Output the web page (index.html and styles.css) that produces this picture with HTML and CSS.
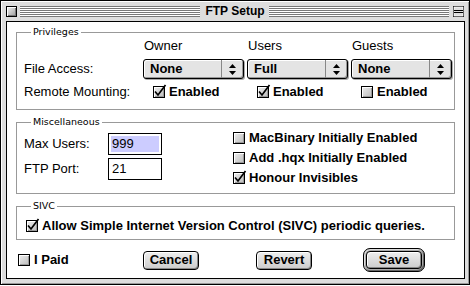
FILE: index.html
```html
<!DOCTYPE html>
<html lang="en">
<head>
    <meta charset="UTF-8">
    <title>FTP Setup</title>
    <link rel="stylesheet" href="styles.css">
</head>
<body>

<div class="window">
    <div class="titlebar">
        <span class="closebox"></span>
        <span class="stripes"></span>
        <span class="title">FTP Setup</span>
        <span class="stripes"></span>
        <svg class="shadebox" width="11" height="11" viewBox="0 0 11 11">
            <rect x="0.5" y="0.5" width="10" height="10" fill="#ddd" stroke="#000"/>
            <rect x="1" y="1" width="9" height="9" fill="none" stroke="#fff" stroke-width="0.8"/>
            <line x1="1" y1="4.5" x2="10" y2="4.5" stroke="#000"/>
            <line x1="1" y1="6.5" x2="10" y2="6.5" stroke="#000"/>
        </svg>
    </div>

    <div class="content">
        <fieldset class="group">
            <legend>Privileges</legend>
            <div class="priv-grid">
                <span></span>
                <span class="col">Owner</span>
                <span class="col">Users</span>
                <span class="col">Guests</span>

                <span class="label">File Access:</span>
                <div class="popup"><span class="popup-value">None</span><span class="popup-arrows"><svg width="7" height="11" viewBox="0 0 7 11"><polygon points="3.5,0 7,4 0,4"/><polygon points="0,7 7,7 3.5,11"/></svg></span></div>
                <div class="popup"><span class="popup-value">Full</span><span class="popup-arrows"><svg width="7" height="11" viewBox="0 0 7 11"><polygon points="3.5,0 7,4 0,4"/><polygon points="0,7 7,7 3.5,11"/></svg></span></div>
                <div class="popup"><span class="popup-value">None</span><span class="popup-arrows"><svg width="7" height="11" viewBox="0 0 7 11"><polygon points="3.5,0 7,4 0,4"/><polygon points="0,7 7,7 3.5,11"/></svg></span></div>

                <span class="label">Remote Mounting:</span>
                <span class="check on indent"><span class="box"><svg width="14" height="14" viewBox="0 0 14 14"><polyline points="1,7.5 4,11 11.5,1"/></svg></span>Enabled</span>
                <span class="check on indent"><span class="box"><svg width="14" height="14" viewBox="0 0 14 14"><polyline points="1,7.5 4,11 11.5,1"/></svg></span>Enabled</span>
                <span class="check indent"><span class="box"></span>Enabled</span>
            </div>
        </fieldset>

        <fieldset class="group">
            <legend>Miscellaneous</legend>
            <div class="misc">
                <div class="misc-fields">
                    <span class="label">Max Users:</span>
                    <div class="field selected"><span>999</span></div>
                    <span class="label">FTP Port:</span>
                    <div class="field"><span>21</span></div>
                </div>
                <div class="misc-checks">
                    <span class="check"><span class="box"></span>MacBinary Initially Enabled</span>
                    <span class="check"><span class="box"></span>Add .hqx Initially Enabled</span>
                    <span class="check on"><span class="box"><svg width="14" height="14" viewBox="0 0 14 14"><polyline points="1,7.5 4,11 11.5,1"/></svg></span>Honour Invisibles</span>
                </div>
            </div>
        </fieldset>

        <fieldset class="group">
            <legend>SIVC</legend>
            <div class="sivc">
                <span class="check on"><span class="box"><svg width="14" height="14" viewBox="0 0 14 14"><polyline points="1,7.5 4,11 11.5,1"/></svg></span>Allow Simple Internet Version Control (SIVC) periodic queries.</span>
            </div>
        </fieldset>

        <div class="actions">
            <span class="check paid"><span class="box"></span>I Paid</span>
            <button class="btn">Cancel</button>
            <button class="btn revert">Revert</button>
            <span class="default-ring"><button class="btn">Save</button></span>
        </div>
    </div>
</div>

</body>
</html>
```

FILE: styles.css
```css
body {
    margin: 0;
    background: #fff;
    font-family: "Liberation Sans", Arial, sans-serif;
    font-size: 13px;
    color: #000;
}
.window {
    width: 470px;
    height: 285px;
    box-sizing: border-box;
    border: 1px solid #000;
    background: #dddddd;
    padding: 0 4px 5px 5px;
    display: flex;
    flex-direction: column;
    box-shadow: inset 1px 1px #fff, inset -1px -1px #999;
}
.titlebar {
    height: 20px;
    display: flex;
    align-items: center;
    flex: none;
}
.closebox {
    width: 11px;
    height: 11px;
    box-sizing: border-box;
    border: 1px solid #000;
    background: linear-gradient(135deg, #f4f4f4, #9a9a9a);
    box-shadow: inset 1px 1px #fff, inset -1px -1px #777;
    flex: none;
}
.stripes {
    flex: 1;
    height: 11px;
    margin: 0 4px 0 3px;
    background: repeating-linear-gradient(to bottom, #777 0 1px, #fff 1px 2px);
}
.stripes + .shadebox {
    margin-right: 1px;
}
.title {
    font-weight: bold;
    font-size: 12px;
    line-height: 14px;
    padding: 0 1px;
}
.shadebox {
    flex: none;
}
.content {
    flex: 1;
    background: #fff;
    border: 1px solid #000;
    padding: 0 9px;
    display: flex;
    flex-direction: column;
}
.group {
    margin: 6px 0 0;
    padding: 0;
    border: 1px solid #999;
    min-width: 0;
}
.group:first-child {
    margin-top: 4px;
}
.group legend {
    margin-left: 14px;
    padding: 0 2px;
    font-family: "DejaVu Sans", sans-serif;
    font-size: 9.5px;
    line-height: 12px;
}
.label {
    line-height: 16px;
}
.priv-grid {
    display: grid;
    grid-template-columns: 116px repeat(3, 101px);
    grid-template-rows: 16px 20px 16px;
    column-gap: 3px;
    row-gap: 5px;
    align-items: center;
    padding: 0 0 9px 7px;
}
.col {
    padding-left: 1px;
    line-height: 16px;
}
.popup {
    height: 20px;
    box-sizing: border-box;
    border: 1px solid #000;
    border-radius: 3px;
    background: #e4e4e4;
    display: flex;
    box-shadow: inset 1px 1px #fff, inset -1px -1px #999, 1px 1px 0 #aaa;
}
.popup-value {
    width: 78px;
    box-sizing: border-box;
    padding-left: 6px;
    font-weight: bold;
    line-height: 18px;
    border-right: 1px solid #888;
}
.popup-arrows {
    flex: 1;
    display: flex;
    align-items: center;
    justify-content: center;
}
.check {
    display: flex;
    align-items: center;
    font-weight: bold;
    line-height: 16px;
    white-space: nowrap;
}
.indent {
    margin-left: 10px;
}
.box {
    position: relative;
    width: 12px;
    height: 12px;
    box-sizing: border-box;
    border: 1px solid #000;
    background: linear-gradient(135deg, #eee, #bbb);
    box-shadow: inset 1px 1px #fff, inset -1px -1px #999;
    margin-right: 4px;
    flex: none;
}
.box svg {
    position: absolute;
    left: 0;
    top: -3px;
    overflow: visible;
}
.box polyline {
    fill: none;
    stroke: #000;
    stroke-width: 1.7;
}
.misc {
    display: flex;
    padding: 0 0 5px 7px;
}
.misc-fields {
    display: grid;
    grid-template-columns: 84px 54px;
    grid-template-rows: 22px 22px;
    row-gap: 3px;
    align-items: center;
    margin-top: 5px;
    align-self: flex-start;
}
.field {
    height: 22px;
    box-sizing: border-box;
    border: 1px solid #000;
    padding: 2px;
}
.field span {
    display: block;
    height: 16px;
    line-height: 16px;
    padding-left: 1px;
}
.field.selected span {
    background: #ccccff;
}
.misc-checks {
    margin-left: 71px;
    display: flex;
    flex-direction: column;
}
.misc-checks .check {
    height: 20px;
}
.sivc {
    padding: 6px 0 5px 9px;
}
.actions {
    display: flex;
    align-items: center;
    height: 24px;
    margin-top: 8px;
}
.paid {
    width: 125px;
    margin-left: 2px;
}
.btn {
    width: 56px;
    height: 19px;
    box-sizing: border-box;
    border: 1px solid #000;
    border-radius: 4px;
    background: linear-gradient(to bottom, #eee, #ccc);
    box-shadow: inset 1px 1px #fff, inset -1px -1px #888;
    font-family: "Liberation Sans", Arial, sans-serif;
    font-weight: bold;
    font-size: 13px;
    line-height: 16px;
    padding: 0;
    color: #000;
}
.revert {
    margin-left: 57px;
}
.default-ring {
    margin-left: 51px;
    width: 62px;
    height: 24px;
    box-sizing: border-box;
    border: 1px solid #000;
    border-radius: 7px;
    background: #aaa;
    box-shadow: inset 1px 1px #ddd, inset -1px -1px #666;
    padding: 2px;
    display: flex;
}
.default-ring .btn {
    width: 56px;
    height: 18px;
}
```
